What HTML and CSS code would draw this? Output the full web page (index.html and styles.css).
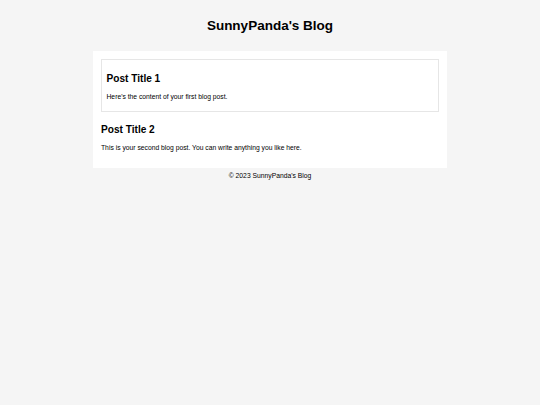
FILE: index.html
```html
<!DOCTYPE html>
<html>
<head>
<meta charset="utf-8">
<title>SunnyPanda's Blog</title>
<link rel="stylesheet" href="styles.css">
</head>
<body>
<header class="site-header">
  <h1 class="site-title">SunnyPanda's Blog</h1>
</header>
<main class="container">
  <article class="post post-boxed">
    <h2 class="post-title">Post Title 1</h2>
    <p class="post-body">Here's the content of your first blog post.</p>
  </article>
  <article class="post">
    <h2 class="post-title">Post Title 2</h2>
    <p class="post-body">This is your second blog post. You can write anything you like here.</p>
  </article>
</main>
<footer class="site-footer">© 2023 SunnyPanda's Blog</footer>
</body>
</html>
```
FILE: styles.css
```css
html, body {
  margin: 0;
  padding: 0;
}
body {
  background: #f5f5f5;
  font-family: "Liberation Sans", Arial, sans-serif;
  color: #000;
}
.site-header {
  padding: 13.5px 0 0;
  text-align: center;
}
.site-title {
  margin: 0;
  font-size: 13.5px;
  line-height: 24px;
  font-weight: bold;
}
.container {
  width: 338px;
  margin: 13.5px auto 0;
  padding: 8px 8px 10px;
  background: #fff;
}
.post {
  padding: 0;
}
.post-boxed {
  border: 1px solid #e6e6e6;
  padding: 4.5px 4.5px 3.5px;
  margin-bottom: 12.5px;
}
.post-title {
  margin: 8.4px 0 9.4px;
  font-size: 10.125px;
  font-weight: bold;
}
.post-body {
  margin: 6.75px 0;
  font-size: 6.75px;
}
.site-footer {
  text-align: center;
  font-size: 6.75px;
  padding: 4px 0;
}
```
